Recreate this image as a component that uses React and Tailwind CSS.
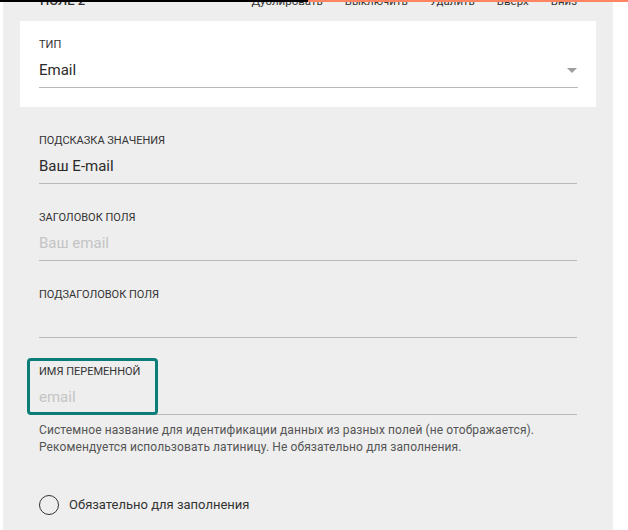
import React from 'react';

const font = { fontFamily: 'Roboto, "Noto Sans", sans-serif' };

// One labelled field with an underline
function Field({ label, value, placeholder, arrow, className = '' }) {
  return (
    <div className={className}>
      <div className="text-[11px] leading-[14px] text-[#333] uppercase">{label}</div>
      <div className="mt-[8px] pb-[7px] border-b border-[#b9b9b9] flex items-center justify-between">
        <span
          className={`text-[15px] leading-[20px] h-[20px] ${
            value ? 'text-[#2a2a2a]' : 'text-[#c4c4c4]'
          }`}
        >
          {value || placeholder}
        </span>
        {arrow && (
          <span className="mr-[1px] w-0 h-0 border-l-[5px] border-r-[5px] border-t-[5px] border-l-transparent border-r-transparent border-t-[#9e9e9e]" />
        )}
      </div>
    </div>
  );
}

export default function App() {
  return (
    <div className="relative w-[628px] h-[530px] overflow-hidden bg-white" style={font}>
      {/* top accent bars */}
      <div className="absolute top-0 left-0 right-0 h-[2px] flex z-10">
        <div className="w-[308px] bg-black" />
        <div className="flex-1 bg-[#ff8562]" />
      </div>

      <div className="ml-[3px] w-[610px] -mt-[9px] bg-[#eeeeee] pb-[40px]">
        {/* header, mostly scrolled out of view */}
        <div className="h-[20px] leading-[20px] text-[#333] flex justify-between items-end pl-[37px] pr-[36px]">
          <span className="uppercase text-[13px] font-medium">Поле 2</span>
          <div className="flex gap-[22px] text-[11.5px]">
            <span>Дублировать</span>
            <span>Выключить</span>
            <span>Удалить</span>
            <span>Вверх</span>
            <span>Вниз</span>
          </div>
        </div>

        {/* type select card */}
        <div className="mt-[10px] mx-[17px] bg-white pt-[17px] pb-[19px] pl-[19px] pr-[18px]">
          <Field label="Тип" value="Email" arrow />
        </div>

        <div className="px-[36px] relative">
          <Field className="mt-[27px]" label="Подсказка значения" value="Ваш E-mail" />
          <Field className="mt-[27px]" label="Заголовок поля" placeholder="Ваш email" />
          <Field className="mt-[27px]" label="Подзаголовок поля" placeholder="" />
          <div className="relative mt-[27px]">
            <Field label="Имя переменной" placeholder="email" />
            {/* highlight box */}
            <div className="absolute left-[-12px] top-[-7px] w-[131px] h-[57px] border-[3px] border-[#0b7d79] rounded-[4px]" />
          </div>

          <p className="mt-[7px] text-[12px] leading-[17px] text-[#555] tracking-[0.1px]">
            Системное название для идентификации данных из разных полей (не отображается).
            <br />
            Рекомендуется использовать латиницу. Не обязательно для заполнения.
          </p>

          <label className="mt-[39px] flex items-center gap-[10px]">
            <span className="w-[20px] h-[20px] rounded-full border-[1.5px] border-[#333]" />
            <span className="text-[13px] text-[#333]">Обязательно для заполнения</span>
          </label>
        </div>
      </div>
    </div>
  );
}
